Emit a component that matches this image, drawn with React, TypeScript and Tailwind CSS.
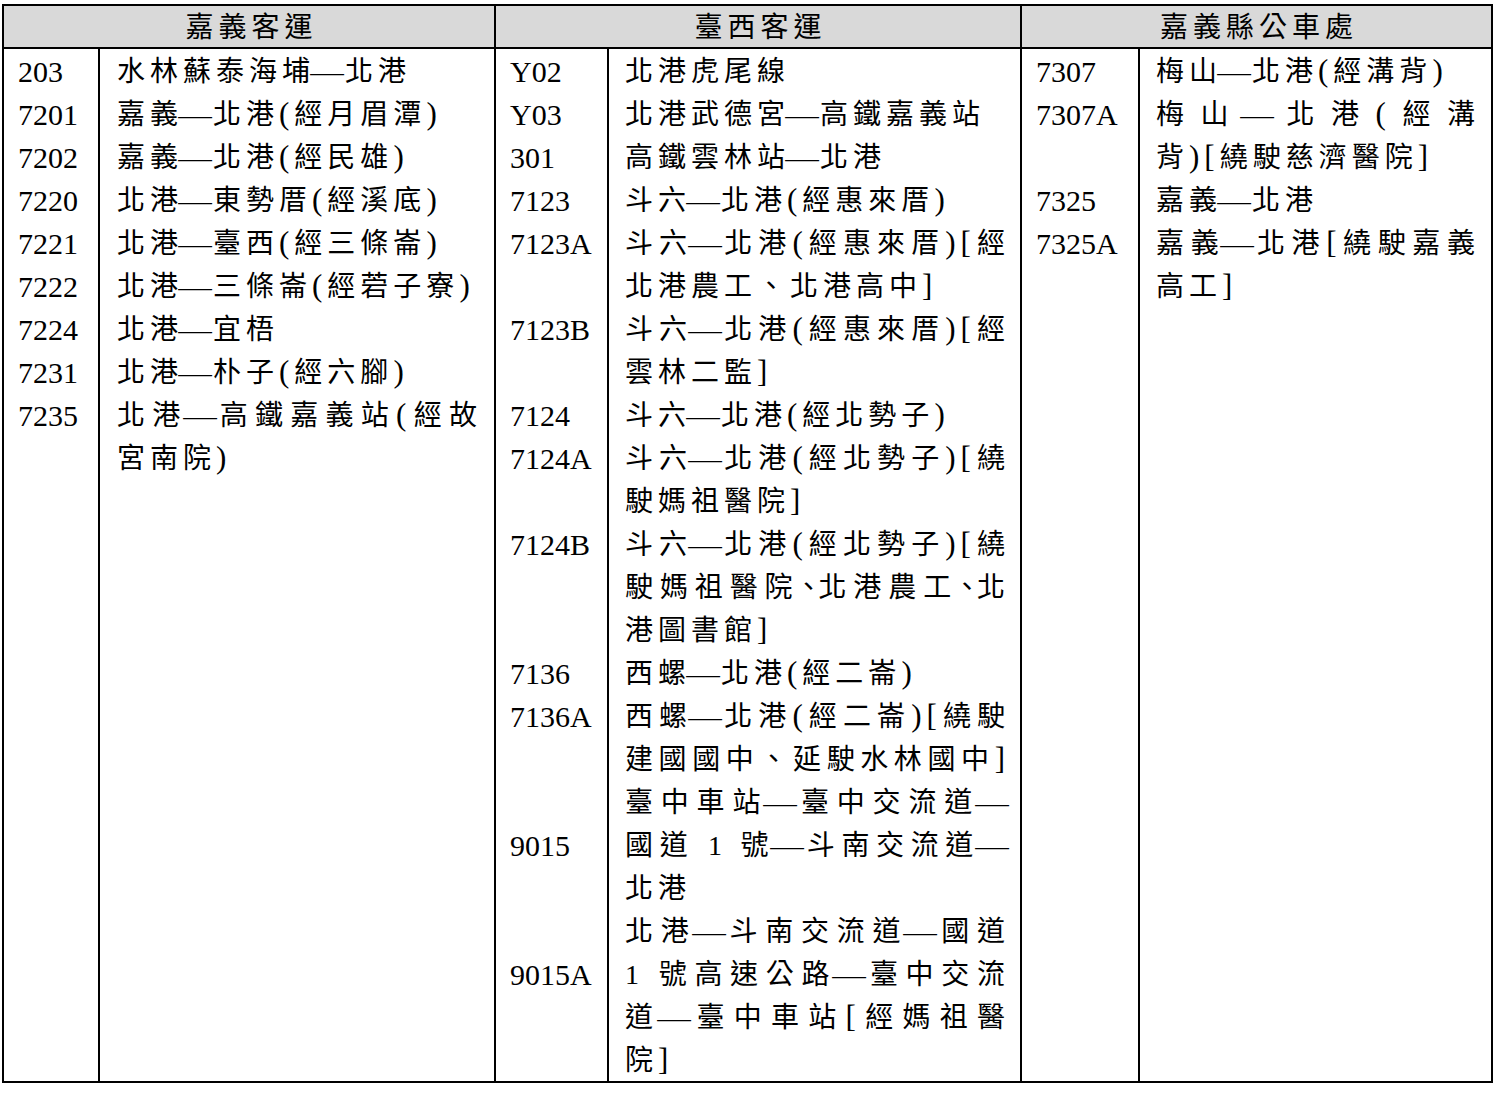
import React from 'react';

type Line = { t: string; j?: boolean };
type Entry = { no: string; at?: number; lines: Line[] };
type Group = {
  title: string;
  numCol: string;
  routeCol: string;
  last?: boolean;
  entries: Entry[];
};

const one = (no: string, t: string): Entry => ({ no, lines: [{ t }] });

const groups: Group[] = [
  {
    title: '嘉義客運',
    numCol: 'w-[96px] pl-[14px]',
    routeCol: 'w-[394px] pl-[17px] pr-[12px]',
    entries: [
      one('203', '水林蘇泰海埔—北港'),
      one('7201', '嘉義—北港(經月眉潭)'),
      one('7202', '嘉義—北港(經民雄)'),
      one('7220', '北港—東勢厝(經溪底)'),
      one('7221', '北港—臺西(經三條崙)'),
      one('7222', '北港—三條崙(經菪子寮)'),
      one('7224', '北港—宜梧'),
      one('7231', '北港—朴子(經六腳)'),
      { no: '7235', lines: [{ t: '北港—高鐵嘉義站(經故', j: true }, { t: '宮南院)' }] },
    ],
  },
  {
    title: '臺西客運',
    numCol: 'w-[113px] pl-[14px]',
    routeCol: 'w-[411px] pl-[16px] pr-[10px]',
    entries: [
      one('Y02', '北港虎尾線'),
      one('Y03', '北港武德宮—高鐵嘉義站'),
      one('301', '高鐵雲林站—北港'),
      one('7123', '斗六—北港(經惠來厝)'),
      { no: '7123A', lines: [{ t: '斗六—北港(經惠來厝)[經', j: true }, { t: '北港農工、北港高中]' }] },
      { no: '7123B', lines: [{ t: '斗六—北港(經惠來厝)[經', j: true }, { t: '雲林二監]' }] },
      one('7124', '斗六—北港(經北勢子)'),
      { no: '7124A', lines: [{ t: '斗六—北港(經北勢子)[繞', j: true }, { t: '駛媽祖醫院]' }] },
      {
        no: '7124B',
        lines: [
          { t: '斗六—北港(經北勢子)[繞', j: true },
          { t: '駛媽祖醫院、北港農工、北', j: true },
          { t: '港圖書館]' },
        ],
      },
      one('7136', '西螺—北港(經二崙)'),
      { no: '7136A', lines: [{ t: '西螺—北港(經二崙)[繞駛', j: true }, { t: '建國國中、延駛水林國中]', j: true }] },
      {
        no: '9015',
        at: 1,
        lines: [
          { t: '臺中車站—臺中交流道—', j: true },
          { t: '國道 1 號—斗南交流道—', j: true },
          { t: '北港' },
        ],
      },
      {
        no: '9015A',
        at: 1,
        lines: [
          { t: '北港—斗南交流道—國道', j: true },
          { t: '1 號高速公路—臺中交流', j: true },
          { t: '道—臺中車站[經媽祖醫', j: true },
          { t: '院]' },
        ],
      },
    ],
  },
  {
    title: '嘉義縣公車處',
    numCol: 'w-[118px] pl-[14px]',
    routeCol: 'w-[351px] pl-[16px] pr-[11px]',
    last: true,
    entries: [
      one('7307', '梅山—北港(經溝背)'),
      { no: '7307A', lines: [{ t: '梅山—北港(經溝', j: true }, { t: '背)[繞駛慈濟醫院]' }] },
      one('7325', '嘉義—北港'),
      { no: '7325A', lines: [{ t: '嘉義—北港[繞駛嘉義', j: true }, { t: '高工]' }] },
    ],
  },
];

// long rule between place names, drawn a bit wider than the glyph
const Dash = () => (
  <span className="inline-block w-[30px] tracking-normal">
    <span className="inline-block -translate-x-[2px] scale-x-[1.2]">—</span>
  </span>
);

// squeezed ideographic comma for full justified lines
const Comma = () => (
  <span className="inline-block -translate-x-[5px] tracking-[-11px]">、</span>
);

// brackets a touch taller, like the half-width ones of the original
const Brackets = ({ t }: { t: string }) => (
  <>
    {t.split(/([()[\]])/).map((p, i) =>
      i % 2 === 1 ? (
        <span key={i} className="text-[31px] leading-none">
          {p}
        </span>
      ) : (
        <React.Fragment key={i}>{p}</React.Fragment>
      ),
    )}
  </>
);

const Rich = ({ t, squeeze }: { t: string; squeeze?: boolean }) => (
  <>
    {t.split('—').map((part, i) => (
      <React.Fragment key={i}>
        {i > 0 && <Dash />}
        {squeeze
          ? part.split('、').map((p, k) => (
              <React.Fragment key={k}>
                {k > 0 && <Comma />}
                <Brackets t={p} />
              </React.Fragment>
            ))
          : <Brackets t={part} />}
      </React.Fragment>
    ))}
  </>
);

export default function App() {
  return (
    <div className="min-h-screen bg-white pt-[4px] pl-[2px] text-black font-['Liberation_Serif','Noto_Sans_CJK_TC',serif]">
      <div className="flex w-[1491px] border-2 border-black">
        {groups.map((g) => (
          <div key={g.title} className={`flex flex-col ${g.last ? '' : 'border-r-2 border-black'}`}>
            {/* company header */}
            <div className="h-[43px] border-b-2 border-black bg-[#d9d9d9] pt-[2px] pl-[5px] text-center text-[28px] leading-[39px] tracking-[5px]">
              {g.title}
            </div>
            <div className="flex flex-1">
              <div className={`${g.numCol} border-r-2 border-black text-[30px]`}>
                {g.entries.map((e) => (
                  <div key={e.no} className="flex flex-col">
                    {e.lines.map((_, i) => (
                      <div key={i} className="h-[43px] pt-[1px] leading-[43px]">
                        {i === (e.at ?? 0) ? e.no : ''}
                      </div>
                    ))}
                  </div>
                ))}
              </div>
              <div className={`${g.routeCol} text-[28px] tracking-[5px]`}>
                {g.entries.map((e) => (
                  <div key={e.no} className="flex flex-col">
                    {e.lines.map((l, i) => (
                      <div
                        key={i}
                        className={`h-[43px] whitespace-nowrap pt-[3px] leading-[40px] ${l.j ? 'text-justify [text-align-last:justify]' : ''}`}
                      >
                        <Rich t={l.t} squeeze={l.j && l.t.split('、').length > 2} />
                      </div>
                    ))}
                  </div>
                ))}
              </div>
            </div>
          </div>
        ))}
      </div>
    </div>
  );
}
